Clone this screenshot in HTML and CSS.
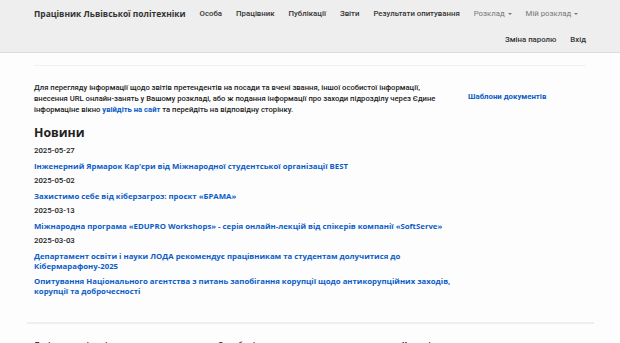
FILE: index.html
```html
<!DOCTYPE html>
<html lang="uk">
<head>
  <meta charset="UTF-8">
  <title>Працівник Львівської політехніки</title>
  <link rel="stylesheet" href="styles.css">
</head>
<body>

  <nav class="navbar">
    <div class="nav-inner">
      <div class="nav-row">
        <a class="brand" href="#">Працівник Львівської політехніки</a>
        <ul class="nav-links">
          <li><a href="#">Особа</a></li>
          <li><a href="#">Працівник</a></li>
          <li><a href="#">Публікації</a></li>
          <li><a href="#">Звіти</a></li>
          <li><a href="#">Результати опитування</a></li>
          <li><a href="#" class="dropdown">Розклад <span class="caret"></span></a></li>
          <li><a href="#" class="dropdown">Мій розклад <span class="caret"></span></a></li>
        </ul>
      </div>
      <ul class="nav-links nav-right">
        <li><a href="#">Зміна паролю</a></li>
        <li><a href="#">Вхід</a></li>
      </ul>
    </div>
  </nav>

  <div class="container">
    <hr class="top-line">

    <div class="row">
      <div class="main-col">
        <p class="intro">Для перегляду інформації щодо звітів претендентів на посади та вчені звання, іншої особистої інформації, внесення URL онлайн-занять у Вашому розкладі, або ж подання інформації про заходи підрозділу через Єдине інформаціне вікно <a href="#">увійдіть на сайт</a> та перейдіть на відповідну сторінку.</p>

        <h1>Новини</h1>
        <!-- news list -->
        <div class="news">
          <div class="date">2025-05-27</div>
          <a href="#">Інженерний Ярмарок Кар’єри від Міжнародної студентської організації BEST</a>
          <div class="date">2025-05-02</div>
          <a href="#">Захистимо себе від кіберзагроз: проєкт «БРАМА»</a>
          <div class="date">2025-03-13</div>
          <a href="#">Міжнародна програма «EDUPRO Workshops» - серія онлайн-лекцій від спікерів компанії «SoftServe»</a>
          <div class="date">2025-03-03</div>
          <a href="#">Департамент освіти і науки ЛОДА рекомендує працівникам та студентам долучитися до Кібермарафону-2025</a>
          <a href="#">Опитування Національного агентства з питань запобігання корупції щодо антикорупційних заходів, корупції та доброчесності</a>
        </div>
      </div>
      <div class="side-col">
        <a href="#">Шаблони документів</a>
      </div>
    </div>
  </div>

  <hr class="bottom-line">

  <div class="footer">
    <div>Львівська політехніка</div>
    <div>Служба підтримки</div>
    <div>Корисні посилання</div>
  </div>

</body>
</html>
```

FILE: styles.css
```css
body { margin: 0; font-family: Roboto, "Liberation Sans", sans-serif; font-size: 7.8px; color: #222; background: #fdfdfd; }
a { color: #0b5cc7; text-decoration: none; font-weight: bold; }

.navbar { background: #eeeeee; border-bottom: 1px solid #dcdcdc; height: 52px; }
.nav-inner { width: 552px; margin: 0 auto; }
.nav-row { display: flex; }
.brand { color: #333; font-family: "Open Sans", sans-serif; font-size: 8.45px; font-weight: bold; line-height: 28px; margin-right: 7px; white-space: nowrap; }
.nav-links { list-style: none; margin: 0; padding: 0; display: flex; }
.nav-links li a { display: block; color: #333; font-weight: 500; font-size: 7.8px; line-height: 28px; padding: 0 7px; white-space: nowrap; }
.nav-links li a.dropdown { color: #777; font-weight: normal; }
.caret { display: inline-block; width: 0; height: 0; border-top: 2.5px solid #777; border-left: 2.5px solid transparent; border-right: 2.5px solid transparent; vertical-align: middle; margin-left: 1px; }
.nav-right { justify-content: flex-end; margin-right: -7px; }
.nav-right li a { line-height: 24px; }

.container { width: 552px; margin: 0 auto; }
.top-line { border: 0; border-top: 1px solid #eef0f2; margin: 12px 0 0; }

.row { display: flex; }
.main-col { width: 419px; }
.side-col { padding: 26px 0 0 15px; }
.intro { margin: 16px 0 0; line-height: 11px; font-size: 7.65px; font-weight: 500; }

h1 { font-family: "Open Sans", sans-serif; font-size: 12.3px; margin: 9px 0 4px; line-height: 18px; }
.news .date { font-weight: 500; line-height: 10px; margin-bottom: 5px; }
.news a { display: block; font-family: "Open Sans", sans-serif; font-size: 7.8px; line-height: 10px; margin-bottom: 5px; }

.bottom-line { border: 0; border-top: 2px solid #eeeeee; width: 567px; margin: 21px auto 0; }
.footer { width: 552px; margin: 0 auto; display: flex; padding-top: 16px; font-weight: bold; }
.footer div { width: 189px; }
```
